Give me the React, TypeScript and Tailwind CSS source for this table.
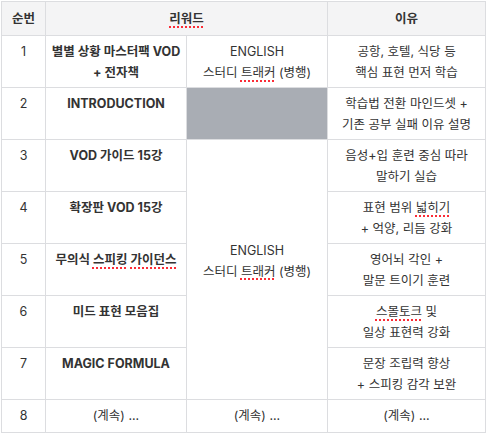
const Typo = ({ children }: { children: React.ReactNode }) => (
  <span className="underline decoration-dotted decoration-red-500 decoration-[1.5px] underline-offset-[3px]">
    {children}
  </span>
);

const rows = [
  { no: "1", name: <>별별 상황 마스터팩 VOD<br />+ 전자책</>, why: <>공항, 호텔, 식당 등<br />핵심 표현 먼저 학습</> },
  { no: "2", name: <>INTRODUCTION</>, why: <>학습법 전환 마인드셋 +<br />기존 공부 실패 이유 설명</> },
  { no: "3", name: <>VOD 가이드 15강</>, why: <>음성+입 훈련 중심 따라<br />말하기 실습</> },
  { no: "4", name: <>확장판 VOD 15강</>, why: <>표현 범위 <Typo>넓히기</Typo><br />+ 억양, 리듬 강화</> },
  { no: "5", name: <>무의식 <Typo>스피킹</Typo> <Typo>가이던스</Typo></>, why: <>영어뇌 각인 +<br />말문 트이기 훈련</> },
  { no: "6", name: <>미드 표현 모음집</>, why: <><Typo>스몰토크</Typo> 및<br />일상 표현력 강화</> },
  { no: "7", name: <>MAGIC FORMULA</>, why: <>문장 조립력 향상<br />+ 스피킹 감각 보완</> },
];

const tracker = (
  <>
    ENGLISH
    <br />
    스터디 <Typo>트래커</Typo> (병행)
  </>
);

export default function App() {
  const td = "border border-[#dcdde0] px-0.5 pt-[5px] pb-[4px] align-top text-center";
  return (
    <div className="pl-px pt-px bg-white min-h-screen">
      <table
        className="w-[484px] border-collapse table-fixed text-[12.5px] leading-[21px] text-[#333333]"
        style={{ fontFamily: '"Inter", "Noto Sans CJK KR", sans-serif' }}
      >
        <colgroup>
          <col className="w-[44px]" />
          <col className="w-[141px]" />
          <col className="w-[141px]" />
          <col className="w-[158px]" />
        </colgroup>
        <thead>
          <tr className="bg-[#f4f4f5] h-[34px]">
            <th className="border border-[#dcdde0] font-semibold align-middle">순번</th>
            <th colSpan={2} className="border border-[#dcdde0] font-semibold align-middle">
              <Typo>리워드</Typo>
            </th>
            <th className="border border-[#dcdde0] font-semibold align-middle">이유</th>
          </tr>
        </thead>
        <tbody>
          {rows.map((r, i) => (
            <tr key={r.no} className="h-[52px]">
              <td className={td}>{r.no}</td>
              <td className={`${td} font-bold whitespace-nowrap`}>{r.name}</td>
              {i === 0 && <td className={td}>{tracker}</td>}
              {i === 1 && <td className="border border-[#dcdde0] bg-[#a9adb4]" />}
              {i === 2 && (
                <td rowSpan={5} className="border border-[#dcdde0] px-0.5 pb-[18px] align-middle text-center">
                  {tracker}
                </td>
              )}
              <td className={`${td} whitespace-nowrap`}>{r.why}</td>
            </tr>
          ))}
          <tr className="h-[33px]">
            <td className={td}>8</td>
            <td className={td}>(계속) ...</td>
            <td className={td}>(계속) ...</td>
            <td className={td}>(계속) ...</td>
          </tr>
        </tbody>
      </table>
    </div>
  );
}
